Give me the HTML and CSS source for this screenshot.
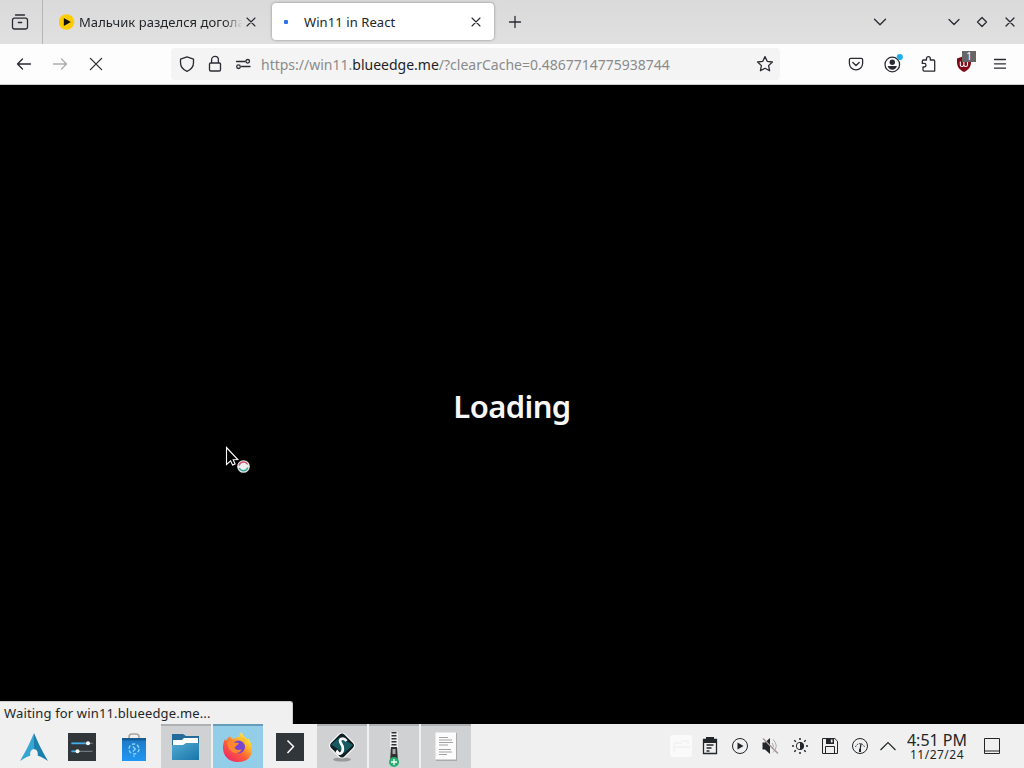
FILE: index.html
```html
<!DOCTYPE html>
<html lang="en">
<head>
<meta charset="utf-8">
<title>Win11 in React</title>
<link rel="stylesheet" href="styles.css">
</head>
<body>
<div class="screen">
  <header class="tabbar">
    <div class="view-button"><svg class="line" width="18" height="18" viewBox="0 0 18 18"><path d="M4.500 2h9M1.500 8V7a1.800 1.800 0 0 1 1.800-1.800h11.400A1.800 1.800 0 0 1 16.500 7v7.200a1.800 1.800 0 0 1-1.800 1.800H3.300a1.800 1.800 0 0 1-1.800-1.800V7M7.300 9.500h3.400"/></svg></div>
    <div class="tab">
      <svg class="favicon" width="16" height="16" viewBox="0 0 16 16"><circle cx="7.500" cy="8" r="7.800" fill="#fc0"/><path d="M4.800 4l7 4-7 4z" fill="#111"/></svg>
      <span class="tab-title faded">Мальчик разделся догола</span>
      <svg class="line tab-close" width="10" height="10" viewBox="0 0 10 10"><path d="M1 1l8 8M9 1L1 9"/></svg>
    </div>
    <div class="tab active">
      <span class="spinner-dot"></span>
      <span class="tab-title">Win11 in React</span>
      <svg class="line tab-close" width="10" height="10" viewBox="0 0 10 10"><path d="M1 1l8 8M9 1L1 9"/></svg>
    </div>
    <div class="new-tab"><svg class="line" width="14" height="14" viewBox="0 0 14 14"><path d="M7 1.500v11M1.500 7h11"/></svg></div>
    <div class="window-controls">
      <svg class="line list-tabs" width="14" height="14" viewBox="0 0 14 14"><path d="M1.500 4.300L7 9.700l5.500-5.400"/></svg>
      <svg class="line" width="28" height="14" viewBox="0 0 28 14"><path d="M9 4.500l5 5 5-5"/></svg>
      <svg class="line" width="28" height="14" viewBox="0 0 28 14"><path d="M14 2.500L18.500 7 14 11.500 9.500 7z"/></svg>
      <svg class="line" width="28" height="14" viewBox="0 0 28 14"><path d="M10 3l8 8M18 3l-8 8"/></svg>
    </div>
  </header>

  <nav class="toolbar">
    <div class="tool"><svg class="line" width="16" height="16" viewBox="0 0 16 16"><path d="M14.500 8H1.500M6.500 3L1.500 8l5 5"/></svg></div>
    <div class="tool disabled"><svg class="line" width="16" height="16" viewBox="0 0 16 16"><path d="M1.500 8h13M9.500 3l5 5-5 5"/></svg></div>
    <div class="tool"><svg class="line" width="16" height="16" viewBox="0 0 16 16"><path d="M2.400 2.400l11.200 11.200M13.600 2.400L2.400 13.600"/></svg></div>
    <div class="urlbar">
      <svg class="line" width="28" height="16" viewBox="0 0 28 16"><path d="M14 .9l6.500 2.300v3.200c0 4-2.200 7.100-6.500 8.900-4.300-1.800-6.500-4.900-6.500-8.900V3.200z"/></svg>
      <svg class="line" width="28" height="18" viewBox="0 0 28 18"><path d="M10.600 8V4.800a3.400 3.400 0 0 1 6.800 0V8M9.600 8h8.800a1.100 1.100 0 0 1 1.100 1.100v5.600a1.300 1.300 0 0 1-1.300 1.300H9.800a1.300 1.300 0 0 1-1.300-1.300V9.100A1.100 1.100 0 0 1 9.600 8z"/></svg>
      <svg class="line" width="28" height="16" viewBox="0 0 28 16"><path d="M7.500 5.500h8.500M12.500 10.500h8.500"/><circle cx="18.700" cy="5.300" r="1.800"/><circle cx="9.500" cy="10.700" r="1.800"/></svg>
      <span class="url">https://win11.<b>blueedge.me</b>/?clearCache=0.4867714775938744</span>
      <svg class="line star" width="18" height="18" viewBox="0 0 18 18"><path d="M9 1.600l2.200 4.700 5.200.7-3.800 3.600 1 5.200L9 13.300l-4.600 2.500 1-5.200L1.600 7l5.200-.7z"/></svg>
    </div>
    <div class="actions">
      <div class="tool"><svg class="line" width="16" height="16" viewBox="0 0 16 16"><path d="M2.800 2.400h10.400a1.400 1.400 0 0 1 1.400 1.400v3.700a6.600 6.300 0 0 1-13.200 0V3.800a1.400 1.400 0 0 1 1.400-1.400zM4.800 6.500L8 9.500l3.200-3"/></svg></div>
      <div class="tool"><svg width="22" height="22" viewBox="0 0 22 22"><circle cx="11.300" cy="11.500" r="7.300" fill="none" stroke="#2b2a33" stroke-width="1.300"/><circle cx="11.300" cy="9.300" r="2.700" fill="#2b2a33"/><path d="M6.700 13h9.200c-.7 2.500-2.400 3.700-4.600 3.700S7.400 15.500 6.700 13z" fill="#2b2a33"/><circle cx="18.800" cy="4" r="3.100" fill="#20ade8"/></svg></div>
      <div class="tool"><svg class="line" width="18" height="18" viewBox="0 0 18 18"><path d="M7.500 5V3.500a1.900 1.900 0 0 1 3.800 0V5h3.200a1.200 1.200 0 0 1 1.200 1.200v9.900H5.100A1.100 1.100 0 0 1 4 15v-3h1.200a1.800 1.800 0 0 0 0-3.600H3.300V6.200A1.200 1.200 0 0 1 4.500 5z"/></svg></div>
      <div class="tool blocker">
        <svg width="16" height="16" viewBox="0 0 16 16"><path d="M8 0l7 2.500v4c0 4.500-2.700 7.500-7 9.500-4.300-2-7-5-7-9.500v-4z" fill="#820a18"/><path d="M4.300 5.500v3.200a1.800 1.800 0 0 0 3.600 0V5.500v3.200a1.800 1.800 0 0 0 3.600 0V5.500" fill="none" stroke="#fff" stroke-width="1.100"/></svg>
        <span class="badge">1</span>
      </div>
      <div class="tool"><svg class="line" width="14" height="14" viewBox="0 0 14 14"><path d="M1.500 2.500h11M1.500 6.800h11M1.500 11.200h11"/></svg></div>
    </div>
  </nav>

  <main class="page">
    <h1 class="loading">Loading</h1>
    <div class="status">Waiting for win11.blueedge.me...</div>
    <svg class="pointer" width="28" height="28" viewBox="0 0 28 28"><path d="M2.500 1.500v17l4.100-3.700 2 4.200 2.500-1.100-1.900-4.200 4.600-.2z" fill="#000" stroke="#fff" stroke-width="1.100"/><circle cx="19.500" cy="20.500" r="6.300" fill="#eee"/><path d="M15 19.500a4.700 4.700 0 0 1 8.700-1" fill="none" stroke="#c85a78" stroke-width="1.500"/><path d="M15.200 22a4.700 4.700 0 0 0 8.700-.5" fill="none" stroke="#3aa498" stroke-width="1.500"/></svg>
  </main>

  <footer class="taskbar">
    <div class="apps">
      <div class="app launcher"><svg width="28" height="28" viewBox="0 0 28 28"><defs><linearGradient id="arch" x2="1"><stop offset=".5" stop-color="#35a5d3"/><stop offset=".5" stop-color="#1b80ad"/></linearGradient></defs><path d="M14 0c3.500 8.500 8 18 14 28-4-2.800-7-4.500-10.300-5.300.5-4-.8-6.500-3.700-6.500s-4.200 2.500-3.700 6.500C7 23.500 4 25.200 0 28 6 18 10.500 8.500 14 0z" fill="url(#arch)"/></svg></div>
      <div class="app"><svg width="28" height="28" viewBox="0 0 28 28"><path fill="#31363b" d="M0 0h28v28H0z"/><path d="M3.500 10.300h21M3.500 18.300h21" stroke="#70777c" stroke-width="1.200"/><path d="M3.500 10.300H20M3.500 18.300H9" stroke="#3daee9" stroke-width="1.800"/><circle cx="20" cy="10.300" r="2" fill="#fff"/><circle cx="9.500" cy="18.300" r="2" fill="#fff"/></svg></div>
      <div class="app"><svg width="28" height="28" viewBox="0 0 28 28"><defs><linearGradient id="bag" x2="0" y2="1"><stop stop-color="#1d78c2"/><stop offset="1" stop-color="#2196f3"/></linearGradient></defs><path d="M9 6V4Q9 1 12 1h4q3 0 3 3v2" fill="none" stroke="#aaa59b" stroke-width="1.500"/><path fill="url(#bag)" d="M2 5h24v23H2z"/><path fill="#155d96" d="M2 5h24v2.500H2z"/><circle cx="14" cy="16" r="5" fill="none" stroke="#8bd5fb" stroke-width="1.400" stroke-dasharray="3.500 1.700"/><path d="M12.800 13.500l2.600 2.500-2.600 2.500M14 22.500V24" fill="none" stroke="#8bd5fb" stroke-width="1.300"/></svg></div>
      <div class="app open"><svg width="30" height="28" viewBox="0 0 30 28"><defs><linearGradient id="folder" x2="1" y2="1"><stop stop-color="#51aad4"/><stop offset="1" stop-color="#1775a8"/></linearGradient></defs><path fill="#246b99" d="M1 1h11l3 2h13v12H1z"/><path fill="#fff" d="M2 7h9l2-2h14v12H2z"/><path fill="url(#folder)" d="M1 12h11l3-2h13v17H1z"/></svg></div>
      <div class="app focused"><svg width="32" height="32" viewBox="0 0 32 32"><defs><linearGradient id="flame" x1=".85" y1=".1" x2=".2" y2=".9"><stop stop-color="#fff047"/><stop offset=".3" stop-color="#ffb42a"/><stop offset=".6" stop-color="#ff6334"/><stop offset="1" stop-color="#f22c64"/></linearGradient></defs><path d="M8 5c1 2 2 3 4 3 1.500-1.500 3-2 5-2 0-2 .8-4 2.500-5 1 4 4.500 5 6 8l.8-1.500C32.500 16 32 31 16 31 2 31-2 18 3 8l1 2c1-2 2.500-3.500 4-5z" fill="url(#flame)"/><circle cx="16.500" cy="16" r="6.500" fill="#7746cf"/><path d="M5 11c3-2 5-1.500 7 .5l5 .5c-1 2.500-3.500 2.800-4.500 4.500 1.500 3 4 2.600 7 2-1 4-7.500 5-11 1C6 18 6 14 5 11z" fill="#ff8732"/><path d="M17 9c4-.5 6 2.500 7 6 1-3 .4-5-1-7-2-2-4-2-6 1z" fill="#ffbe32"/></svg></div>
      <div class="app"><svg width="28" height="28" viewBox="0 0 28 28"><path fill="#31363b" d="M0 0h28v28H0z"/><path d="M11.500 7.500l6 6-6 6.500" fill="none" stroke="#fff" stroke-width="1.500"/></svg></div>
      <div class="app open"><svg width="30" height="30" viewBox="0 0 30 30"><ellipse cx="15" cy="27.500" rx="9" ry="2" fill="#999"/><rect x="5" y="3.500" width="20" height="20" rx="4" transform="rotate(45 15 13.500)" fill="#102126" stroke="#fff" stroke-width="1.200"/><path d="M4 12.500L13 5l13 8-9 8z" fill="#175a62"/><path d="M19.500 9c-3.500-4.500-8.500-1.500-5.500 2.300 2.500 3.200 2.500 9.200-.5 10.200-2.500.7-4-1.500-2.500-3" fill="none" stroke="#fff" stroke-width="2.700"/></svg></div>
      <div class="app open zipped"><svg width="28" height="38" viewBox="0 0 28 38"><path d="M14 3v16" stroke="#eee" stroke-width="8"/><path d="M14 3v17" stroke="#333" stroke-width="5" stroke-dasharray="1.500 1.500"/><path d="M11 18h6l1 15h-8z" fill="#303030"/><path d="M12.500 20h3v5h-3z" fill="#aaa"/><circle cx="14" cy="33" r="5" fill="#27ae70"/><path d="M14 30v6M11 33h6" stroke="#fff" stroke-width="1.300"/></svg></div>
      <div class="app open"><svg width="22" height="29" viewBox="0 0 22 29"><path fill="#aaa" d="M1 1h21v28H1z"/><path fill="#fcfcfc" d="M.5.500h20.500v27H.5z"/><path d="M4 5.500h9M4 8h13M4 10.500h14M4 13h9M4 17.500h12M4 20h13M4 22.500h8" stroke="#999" stroke-width=".9"/></svg></div>
    </div>
    <div class="tray">
      <svg width="30" height="24" viewBox="0 0 30 24"><rect x="5" y="1" width="22" height="22" rx="3" fill="#fafafa"/><path d="M9 18V9h7l2-2h5v3M9 13h16" fill="none" stroke="#f1f1f1" stroke-width="1.400"/></svg>
      <svg class="solid" width="30" height="20" viewBox="0 0 30 20"><path d="M8.500 3.500h13v14h-13zM11.500 9h7M11.500 12h5M11.500 15h3" stroke-width="1.300"/><path class="fill" d="M8 3h3V1h8v2h3v4H8z"/></svg>
      <svg class="solid" width="30" height="20" viewBox="0 0 30 20"><circle cx="15" cy="10" r="7.500"/><path class="fill" d="M12.500 6.500l6 3.500-6 3.500z"/></svg>
      <svg class="solid" width="30" height="20" viewBox="0 0 30 20"><path class="fill" d="M7.500 6.500H10l5-4.500v16L10 13.500H7.500z"/><path d="M17 7q3 3 0 6M18 3.500q6.500 6.500 0 13" stroke="#aaa"/><path d="M8 2.500l15 15" stroke="#a69797" stroke-width="1.500"/></svg>
      <svg class="solid" width="30" height="20" viewBox="0 0 30 20"><circle cx="15" cy="10" r="3.700"/><path class="fill" d="M15 6.300a3.700 3.700 0 0 1 0 7.400z"/><path d="M15 2v2M15 16v2M7 10h2M21 10h2M9.300 4.300l1.500 1.500M19.200 14.200l1.500 1.500M20.700 4.300l-1.500 1.500M10.800 14.200l-1.500 1.500" stroke-width="1.500"/></svg>
      <svg class="solid" width="30" height="20" viewBox="0 0 30 20"><path d="M7.500 2.500h12.300l2.700 2.700v12.300h-15zM10.500 17.500v-7h9v7"/><path class="fill" d="M11 2h8v6h-8z"/><path d="M16.700 3.500v3" stroke="#eee" stroke-width="1.700"/></svg>
      <svg class="solid" width="30" height="20" viewBox="0 0 30 20"><circle cx="15" cy="10" r="7.500"/><path d="M10.500 11a4.700 4.700 0 0 1 9 0" stroke-dasharray="1.500 1"/><path d="M15 14.500l1-7" stroke-width="1.300"/><path class="fill" d="M14 13h2v3h-2z"/></svg>
      <svg class="solid" width="26" height="20" viewBox="0 0 26 20"><path d="M5.500 14L13 6.500l7.500 7.500" stroke-width="1.200"/></svg>
      <div class="clock"><span class="time">4:51 PM</span><span class="date">11/27/24</span></div>
      <svg class="solid" width="38" height="20" viewBox="0 0 38 20"><path d="M11.500 2.500h15v15h-15zM11.500 15h15"/></svg>
    </div>
  </footer>
</div>
</body>
</html>
```
FILE: styles.css
```css
* { box-sizing: border-box; }
body { margin: 0; font-family: "Noto Sans", sans-serif; color: #232629; }
svg { display: block; flex: none; }
.screen { width: 1024px; height: 768px; display: flex; flex-direction: column; overflow: hidden; background: #000; }
.line { fill: none; stroke: #2b2a33; stroke-width: 1.3; stroke-linecap: round; stroke-linejoin: round; }

.tabbar { height: 44px; flex: none; display: flex; background: linear-gradient(#dadada, #e0e0e0); }
.view-button { width: 43px; display: flex; align-items: center; justify-content: center; padding-right: 2px; border-right: 1px solid #b5b5b5; }
.tab { width: 222px; height: 38px; margin: 3px 0 0 6px; padding: 0 12px 0 10px; display: flex; align-items: center; font-size: 13px; white-space: nowrap; }
.tab.active { background: #fff; border-radius: 4px; margin-left: 1px; box-shadow: 0 0 3px rgba(0, 0, 0, .4); padding: 0 13px 0 12px; height: 37px; }
.favicon { margin-right: 4px; }
.tab-title { flex: 1; overflow: hidden; }
.tab .faded { flex: none; width: 165px; margin-right: 2px; -webkit-mask-image: linear-gradient(90deg, #000 88%, transparent 99%); mask-image: linear-gradient(90deg, #000 88%, transparent 99%); letter-spacing: .06px; }
.tab-close { stroke-width: 1.1; }
.spinner-dot { width: 4px; height: 4px; border-radius: 1px; background: #2f72ed; margin-right: 16px; }
.tab.active .tab-title { letter-spacing: .08px; }
.new-tab { width: 42px; display: flex; align-items: center; justify-content: center; }
.window-controls { margin-left: auto; display: flex; align-items: center; }
.list-tabs { margin-right: 53px; }

.toolbar { height: 41px; flex: none; display: flex; align-items: center; padding: 0 6px; background: #fdfdfd; border-bottom: 1px solid #ccc; }
.tool { width: 36px; height: 32px; display: flex; align-items: center; justify-content: center; }
.disabled { opacity: .38; }
.urlbar { width: 609px; height: 32px; margin-left: 57px; padding: 0 6px 0 2px; display: flex; align-items: center; background: #f4f4f4; border-radius: 4px; }
.url { flex: 1; padding-left: 4px; font-size: 14px; color: #8b8b8b; white-space: nowrap; }
.url b { font-weight: 400; color: #1f1e25; }
.actions { display: flex; margin-left: auto; }
.blocker { position: relative; }
.badge { position: absolute; left: 16px; top: 3px; width: 14px; height: 11px; background: #666; color: #fff; font-size: 10px; line-height: 11px; text-align: center; }

.page { position: relative; flex: 1; display: flex; align-items: center; justify-content: center; background: #000; }
.loading { margin: 2px 0 0; font-size: 31px; font-weight: 600; line-height: 44px; letter-spacing: -.6px; color: #f7f7f7; }
.status { position: absolute; left: 0; bottom: 0; width: 293px; height: 23px; padding-left: 4px; font-size: 13px; line-height: 22px; letter-spacing: .15px; background: #f0f0f0; border: 1px solid #ccc; border-width: 1px 1px 0 0; border-radius: 0 3px 0 0; }
.pointer { position: absolute; left: 224px; top: 361px; }

.taskbar { height: 44px; flex: none; display: flex; justify-content: space-between; background: #f0f0f0; }
.apps { display: flex; gap: 2px; padding-left: 13px; }
.app { width: 50px; display: flex; align-items: center; justify-content: center; border-top: 2px solid transparent; padding-bottom: 1px; }
.launcher { width: 42px; }
.open { background: #d0d1d2; border-color: #aeb0b1; }
.focused { background: #93cee9; border-color: #659db9; }
.zipped { padding-top: 3px; }
.tray { display: flex; align-items: center; padding-right: 13px; }
.solid { fill: none; stroke: #232629; stroke-width: 1; }
.solid .fill { fill: #232629; stroke: none; }
.clock { width: 72px; display: flex; flex-direction: column; align-items: center; }
.time { font-size: 16px; line-height: 17px; }
.date { font-size: 12px; line-height: 12px; letter-spacing: .5px; }
```
